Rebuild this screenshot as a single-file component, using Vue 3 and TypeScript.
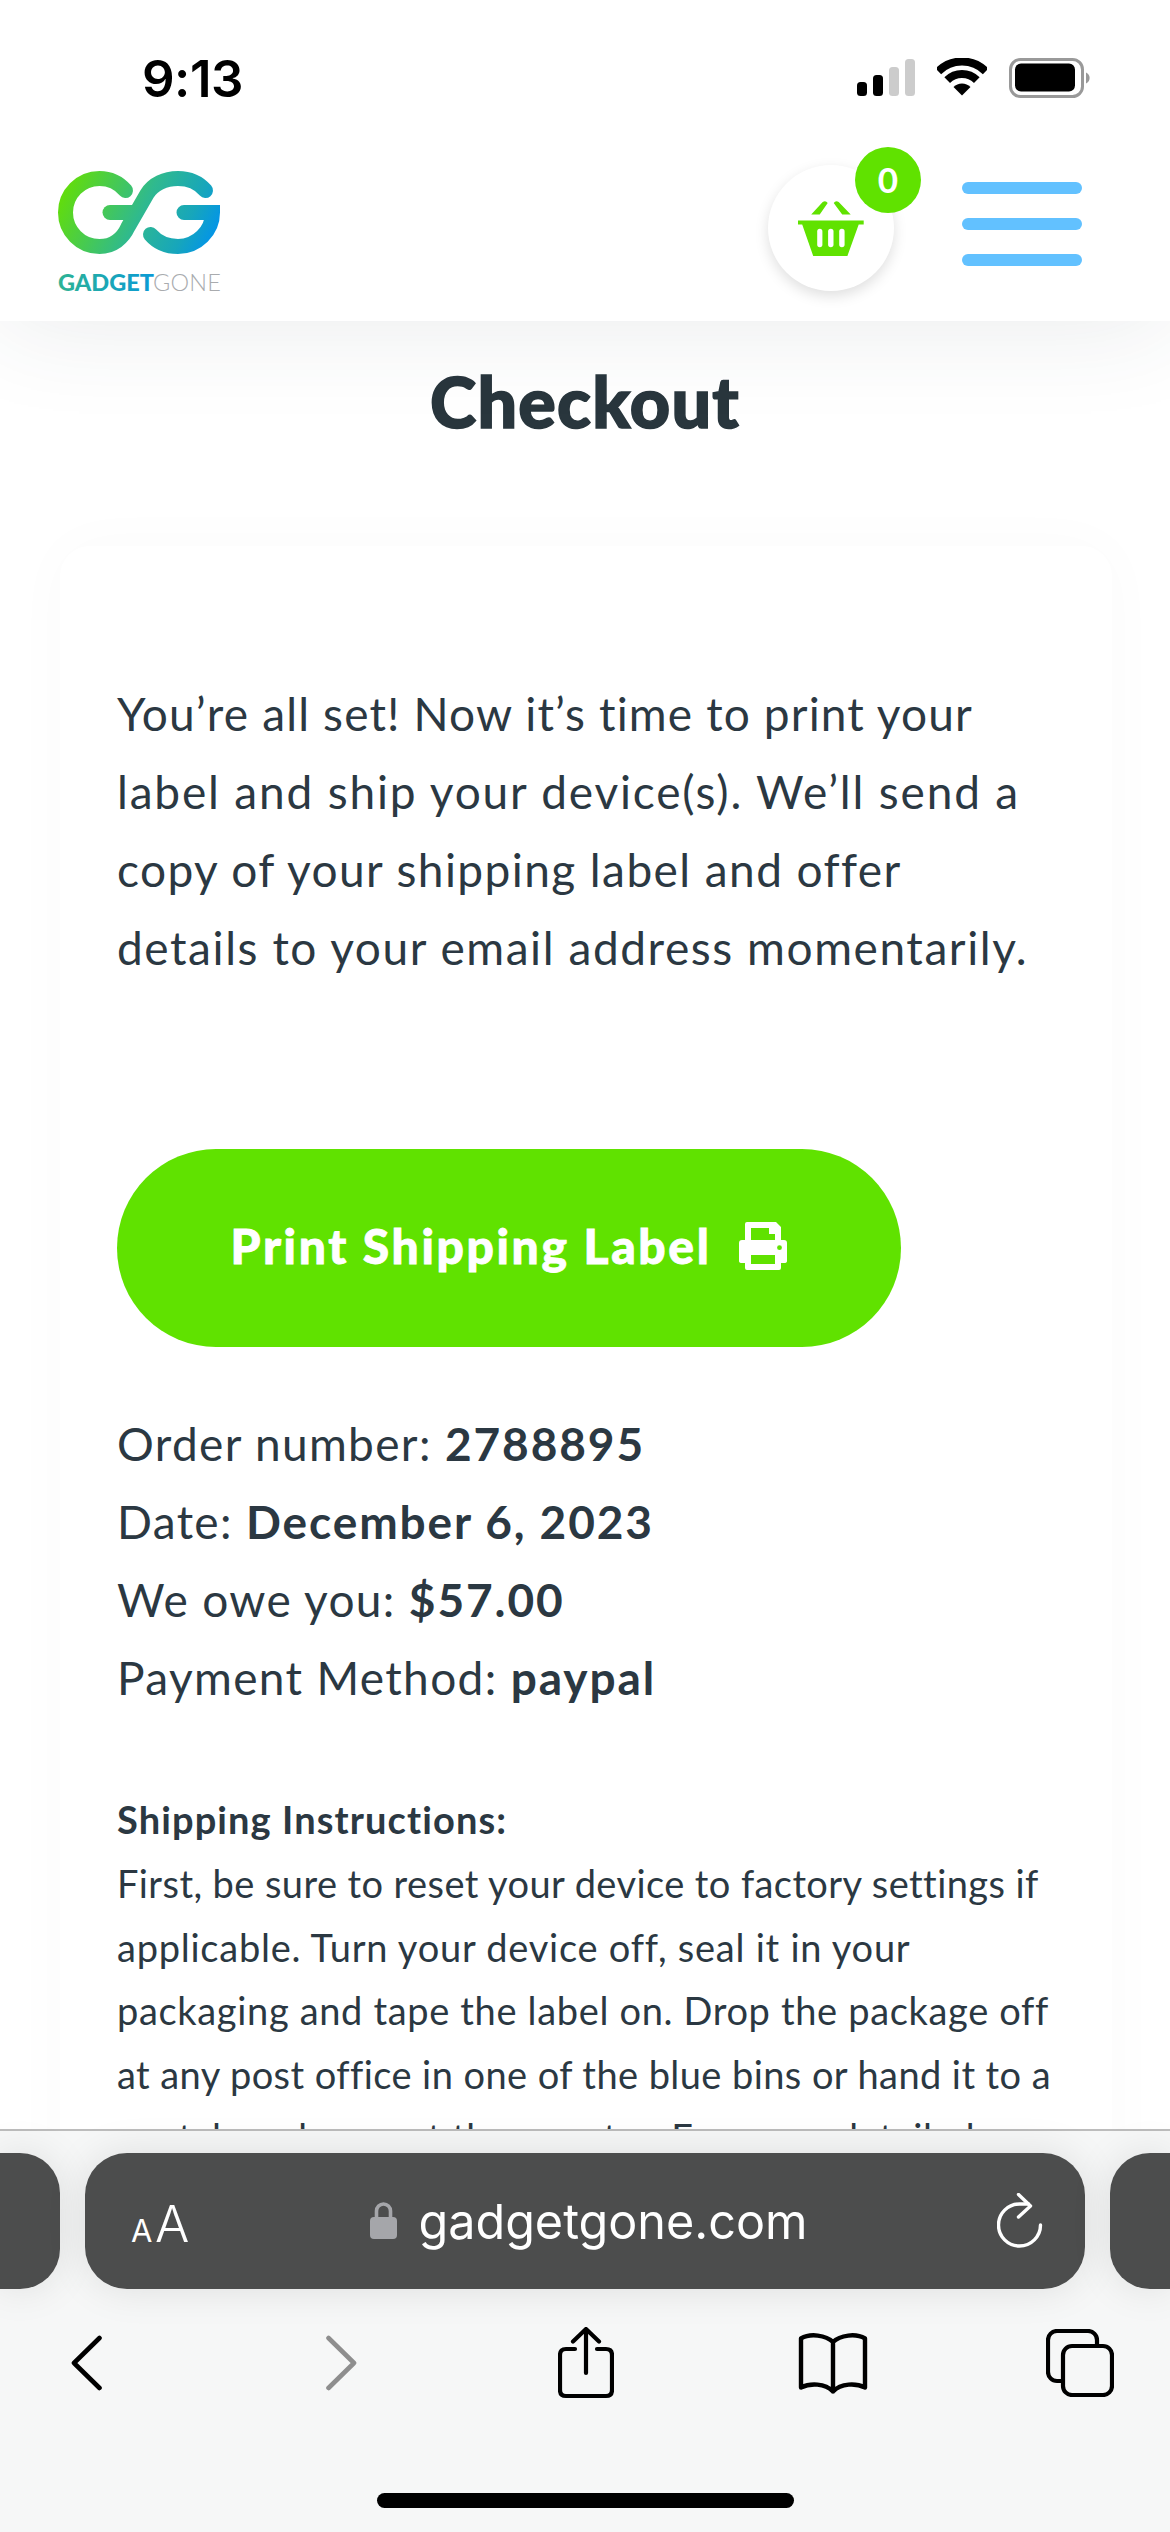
<script setup lang="ts">
interface TextLine { text: string; track: number }

const intro: TextLine[] = [
  { text: 'You’re all set! Now it’s time to print your', track: 1.15 },
  { text: 'label and ship your device(s). We’ll send a', track: 1.82 },
  { text: 'copy of your shipping label and offer', track: 1.42 },
  { text: 'details to your email address momentarily.', track: 1.57 },
]
const order: { label: string; value: string }[] = [
  { label: 'Order number:', value: '2788895' },
  { label: 'Date:', value: 'December 6, 2023' },
  { label: 'We owe you:', value: '$57.00' },
  { label: 'Payment Method:', value: 'paypal' },
]
const steps: TextLine[] = [
  { text: 'First, be sure to reset your device to factory settings if', track: 0.42 },
  { text: 'applicable. Turn your device off, seal it in your', track: 0.76 },
  { text: 'packaging and tape the label on. Drop the package off', track: 0.66 },
  { text: 'at any post office in one of the blue bins or hand it to a', track: 0.42 },
  { text: 'postal worker or at the counter. For more detailed', track: 0.65 },
]
</script>

<template>
  <div class="page">
    <header class="header">
      <div class="status">
        <span class="time">9:13</span>
        <div class="status-icons">
          <svg width="58" height="38" viewBox="0 0 58 38">
            <rect x="0" y="24" width="10" height="14" rx="3.5" fill="#000" />
            <rect x="16" y="17" width="10" height="21" rx="3.5" fill="#000" />
            <rect x="32" y="9" width="10" height="29" rx="3.5" fill="#ccc" />
            <rect x="48" y="1" width="10" height="37" rx="3.5" fill="#ccc" />
          </svg>
          <svg width="50" height="38" viewBox="936 59 50 38">
            <path d="M937.3 72.3A33.5 33.5 0 0 1 984.7 72.3" fill="none" stroke="#000" stroke-width="8" />
            <path d="M946.2 81.2A21 21 0 0 1 975.8 81.2" fill="none" stroke="#000" stroke-width="8" />
            <path d="M961 96.5L952.5 88A12 12 0 0 1 969.5 88Z" fill="#000" />
          </svg>
          <svg width="82" height="40" viewBox="0 0 82 40">
            <rect x="1.5" y="1.5" width="72" height="37" rx="10" fill="none" stroke="#999" stroke-width="3" />
            <rect x="6" y="6" width="60" height="28" rx="6" fill="#000" transform="translate(0 -0.5)" />
            <path d="M77 14.5a6 6 0 0 1 0 11Z" fill="#999" />
          </svg>
        </div>
      </div>
      <nav class="nav">
        <svg class="logo" width="164" height="130" viewBox="57 170 164 130" aria-label="GadgetGone">
          <defs>
            <linearGradient id="gg" gradientUnits="userSpaceOnUse" x1="62" y1="178" x2="212" y2="250">
              <stop offset="0" stop-color="#66e000" />
              <stop offset="0.52" stop-color="#2fb98f" />
              <stop offset="0.8" stop-color="#17a6bb" />
              <stop offset="1" stop-color="#0092ee" />
            </linearGradient>
            <linearGradient id="gt" gradientUnits="userSpaceOnUse" x1="58" y1="0" x2="154" y2="0">
              <stop offset="0" stop-color="#2db394" />
              <stop offset="1" stop-color="#0a9ad6" />
            </linearGradient>
          </defs>
          <g fill="none" stroke="url(#gg)" stroke-width="15" stroke-linecap="round">
            <path d="M125.5 190.5C119 183 110 178.5 99.5 178.5C80.5 178.5 65.5 194 65.5 212.5C65.5 231 80.5 246.5 99.5 246.5C113 246.5 123 238 128 227L147 194C153 184 165 178.5 178 178.5C189 178.5 199 183 205.5 190.5" />
            <path d="M110 212.5H136" />
            <path d="M184 212.5H212.5C212.5 231 197 246.5 178 246.5C167 246.5 157 242 150.5 234.5" stroke-linejoin="miter" />
          </g>
          <text x="58" y="291" class="logo-a" fill="url(#gt)" textLength="96">GADGET</text>
          <text x="153" y="291" class="logo-b" fill="#a9abae" textLength="68">GONE</text>
        </svg>
        <div class="nav-actions">
          <div class="cart">
            <svg width="66" height="56" viewBox="18.3 9.5 66 56">
              <path fill="#60e200" d="M31.5 24L43 11.5Q46 9.5 48 12.5L40 24ZM71 24L59 11.5Q56 9.5 54 12.5L62.5 24ZM18.3 30H84V34H79L67.7 65.5H33.5L22.5 34H18.3Z" />
              <g fill="#fff">
                <rect x="37.5" y="38.3" width="5.2" height="18.4" rx="2.6" />
                <rect x="48.4" y="38.3" width="5.4" height="18.4" rx="2.7" />
                <rect x="59.5" y="38.3" width="5.4" height="18.4" rx="2.7" />
              </g>
            </svg>
            <span class="badge">0</span>
          </div>
          <div class="burger"><i /><i /><i /></div>
        </div>
      </nav>
    </header>

    <main class="main">
      <h1 class="title">Checkout</h1>
      <section class="card">
        <p class="intro">
          <span
            v-for="line in intro"
            :key="line.text"
            class="line"
            :style="{ letterSpacing: line.track + 'px' }"
          >{{ line.text }}</span>
        </p>
        <button class="print" type="button">
          <span>Print Shipping Label</span>
          <svg width="48" height="48" viewBox="13 11 48 48">
            <path fill="#fff" fill-rule="evenodd" d="M21 11H50L55 16V29H58Q61 29 61 32V50Q61 52 58 52H55V57Q55 59 53 59H21Q19 59 19 57V52H16Q13 52 13 50V32Q13 29 16 29H19V13Q19 11 21 11ZM25 17V29H49V23H43V17ZM25 44V53H49V44Z" />
            <circle cx="53.5" cy="36.7" r="2.4" fill="#60e200" />
          </svg>
        </button>
        <ul class="order">
          <li v-for="row in order" :key="row.label">{{ row.label }} <b>{{ row.value }}</b></li>
        </ul>
        <div class="ship">
          <b class="ship-title">Shipping Instructions:</b>
          <span
            v-for="line in steps"
            :key="line.text"
            class="line"
            :style="{ letterSpacing: line.track + 'px' }"
          >{{ line.text }}</span>
        </div>
      </section>
    </main>

    <footer class="toolbar">
      <div class="tabs-row">
        <div class="side side-l" />
        <div class="url">
          <span class="aa"><small>A</small>A</span>
          <span class="address">
            <svg width="27" height="38" viewBox="0 0 27 38">
              <path d="M6.5 17V10a7 7 0 0 1 14 0v7" fill="none" stroke="#a5a6aa" stroke-width="3.6" />
              <rect x="0" y="16" width="27" height="22" rx="4" fill="#a5a6aa" />
            </svg>
            <span>gadgetgone.com</span>
          </span>
          <svg class="reload" width="46" height="55" viewBox="997.5 2192 46 55">
            <path d="M1041 2224A21 21 0 1 1 1020 2203H1029" fill="none" stroke="#fff" stroke-width="3.4" stroke-linecap="round" />
            <path d="M1019 2193.5L1031 2205L1019 2216" fill="none" stroke="#fff" stroke-width="3.4" stroke-linecap="round" stroke-linejoin="round" />
          </svg>
        </div>
        <div class="side side-r" />
      </div>
      <div class="icons">
        <svg width="31" height="56" viewBox="0 0 31 56">
          <path d="M28.5 3L3 28L28.5 53" fill="none" stroke="#000" stroke-width="4.6" stroke-linecap="round" stroke-linejoin="round" />
        </svg>
        <svg width="31" height="56" viewBox="0 0 31 56">
          <path d="M2.5 3L28 28L2.5 53" fill="none" stroke="#8e8e8e" stroke-width="4.6" stroke-linecap="round" stroke-linejoin="round" />
        </svg>
        <svg width="56" height="72" viewBox="0 0 56 72">
          <path d="M17 22H8Q2 22 2 28V63Q2 69 8 69H48Q54 69 54 63V28Q54 22 48 22H39" fill="none" stroke="#000" stroke-width="4.2" stroke-linecap="round" />
          <path d="M28 46V2M15 14.5L28 2L41 14.5" fill="none" stroke="#000" stroke-width="4.2" stroke-linecap="round" stroke-linejoin="round" />
        </svg>
        <svg width="70" height="62" viewBox="0 0 70 62">
          <path d="M35 10C28 3 12 1 3 6.5V55.5C12 51 27 51 35 59.5C43 51 58 51 67 55.5V6.5C58 1 42 3 35 10ZM35 10V59.5" fill="none" stroke="#000" stroke-width="4.4" stroke-linejoin="round" stroke-linecap="round" />
        </svg>
        <svg width="68" height="68" viewBox="0 0 68 68">
          <rect x="2" y="2" width="49" height="50" rx="9" fill="none" stroke="#000" stroke-width="4.2" />
          <rect x="17" y="17" width="49" height="49" rx="9" fill="#f6f7f7" stroke="#000" stroke-width="4.2" />
        </svg>
      </div>
      <div class="home" />
    </footer>
  </div>
</template>

<style>
html, body { margin: 0; background: #fff; }
</style>

<style scoped>
.page {
  width: 1170px;
  height: 2532px;
  display: flex;
  flex-direction: column;
  overflow: hidden;
  background: #fff;
  font-family: Lato, "Noto Sans", sans-serif;
  color: #2b3842;
}
.header {
  position: relative;
  z-index: 2;
  flex: none;
  height: 321px;
  background: #fff;
  box-shadow: 0 0 100px rgba(44, 62, 70, 0.11);
}
.status {
  height: 130px;
  display: flex;
  justify-content: space-between;
  align-items: flex-start;
  padding: 0 79px 0 142px;
  box-sizing: border-box;
}
.time {
  font: 600 51px/50px Inter, sans-serif;
  color: #000;
  margin-top: 54px;
  letter-spacing: -0.5px;
}
.status-icons {
  display: flex;
  gap: 22px;
  margin-top: 58px;
  align-items: flex-start;
}
.nav {
  display: flex;
  justify-content: space-between;
  align-items: flex-start;
  padding: 0 88px 0 57px;
}
.logo { margin-top: 40px; display: block; }
.logo-a { font: 900 23.5px Lato, sans-serif; }
.logo-b { font: 300 23.5px Lato, sans-serif; }
.nav-actions {
  display: flex;
  align-items: flex-start;
  gap: 68px;
  margin-top: 35px;
}
.cart {
  position: relative;
  width: 126px;
  height: 126px;
  border-radius: 50%;
  background: #fff;
  box-shadow: 0 5px 14px rgba(0, 0, 0, 0.13);
  display: flex;
  align-items: center;
  justify-content: center;
}
.cart svg { display: block; }
.badge {
  position: absolute;
  top: -18px;
  right: -27px;
  width: 66px;
  height: 66px;
  border-radius: 50%;
  background: #60e200;
  color: #fff;
  font: 700 35px/64px Lato, sans-serif;
  text-align: center;
}
.burger {
  display: flex;
  flex-direction: column;
  gap: 24px;
  margin-top: 17px;
}
.burger i {
  display: block;
  width: 120px;
  height: 12px;
  border-radius: 6px;
  background: #62c1ff;
}
.main {
  flex: 1;
  min-height: 0;
  overflow: hidden;
}
.title {
  margin: 42px 0 0;
  text-align: center;
  font-size: 70px;
  line-height: 76px;
  font-weight: 900;
  color: #29363d;
  letter-spacing: 1.2px;
  -webkit-text-stroke: 1.6px #29363d;
}
.card {
  margin: 107px 58px 0 60px;
  padding: 129px 0 0 57px;
  border-radius: 30px 30px 0 0;
  background: #fff;
  box-shadow: 0 0 60px rgba(44, 62, 70, 0.025);
  min-height: 2000px;
}
.line { display: block; white-space: nowrap; }
.intro {
  margin: 0;
  font-size: 46px;
  line-height: 78px;
}
.print {
  margin-top: 162px;
  width: 784px;
  height: 198px;
  border: 0;
  border-radius: 99px;
  background: #60e200;
  color: #fff;
  font: 900 48px/1 Lato, sans-serif;
  letter-spacing: 2.6px;
  -webkit-text-stroke: 0.8px #fff;
  display: flex;
  align-items: center;
  justify-content: center;
  gap: 28px;
  padding: 0 0 5px;
}
.order {
  list-style: none;
  margin: 58px 0 0;
  padding: 0;
  font-size: 46px;
  line-height: 78px;
  letter-spacing: 1.35px;
}
.order b { font-weight: 700; letter-spacing: 1.9px; }
.ship {
  margin-top: 69px;
  font-size: 38px;
  line-height: 63.5px;
}
.ship-title {
  display: block;
  font-weight: 700;
  line-height: 66px;
  letter-spacing: 1.1px;
}
.toolbar {
  position: relative;
  z-index: 2;
  flex: none;
  height: 403px;
  box-sizing: border-box;
  border-top: 2px solid #bcbcbc;
  background: #f6f7f7;
  padding-top: 22px;
  display: flex;
  flex-direction: column;
}
.tabs-row {
  display: flex;
  gap: 25px;
  height: 136px;
}
.side, .url {
  background: #4c4d4d;
  box-shadow: 0 0 40px rgba(0, 0, 0, 0.1);
}
.side { width: 60px; flex: none; }
.side-l { border-radius: 0 40px 40px 0; }
.side-r { border-radius: 40px 0 0 40px; }
.url {
  flex: 1;
  border-radius: 42px;
  display: grid;
  grid-template-columns: 1fr auto 1fr;
  align-items: center;
  padding: 0 42px 0 46px;
  color: #fff;
}
.aa {
  font: 300 51px/1 Inter, sans-serif;
  margin-top: 4px;
  letter-spacing: -0.5px;
}
.aa small { font-size: 31px; font-weight: 400; margin-right: 3px; }
.address {
  display: flex;
  align-items: center;
  gap: 21px;
  font: 400 48.5px/1 Inter, sans-serif;
  margin: 2px 0 0 4px;
}
.address svg { margin-top: -4px; }
.reload { justify-self: end; margin-top: -2px; }
.icons {
  display: grid;
  grid-template-columns: 248px 263px 225px 269px 226px;
  justify-items: center;
  align-items: center;
  margin: 38px 0 0 -38px;
  height: 70px;
}
.home {
  width: 417px;
  height: 15px;
  border-radius: 8px;
  background: #000;
  margin: 96px auto 0;
}
</style>
